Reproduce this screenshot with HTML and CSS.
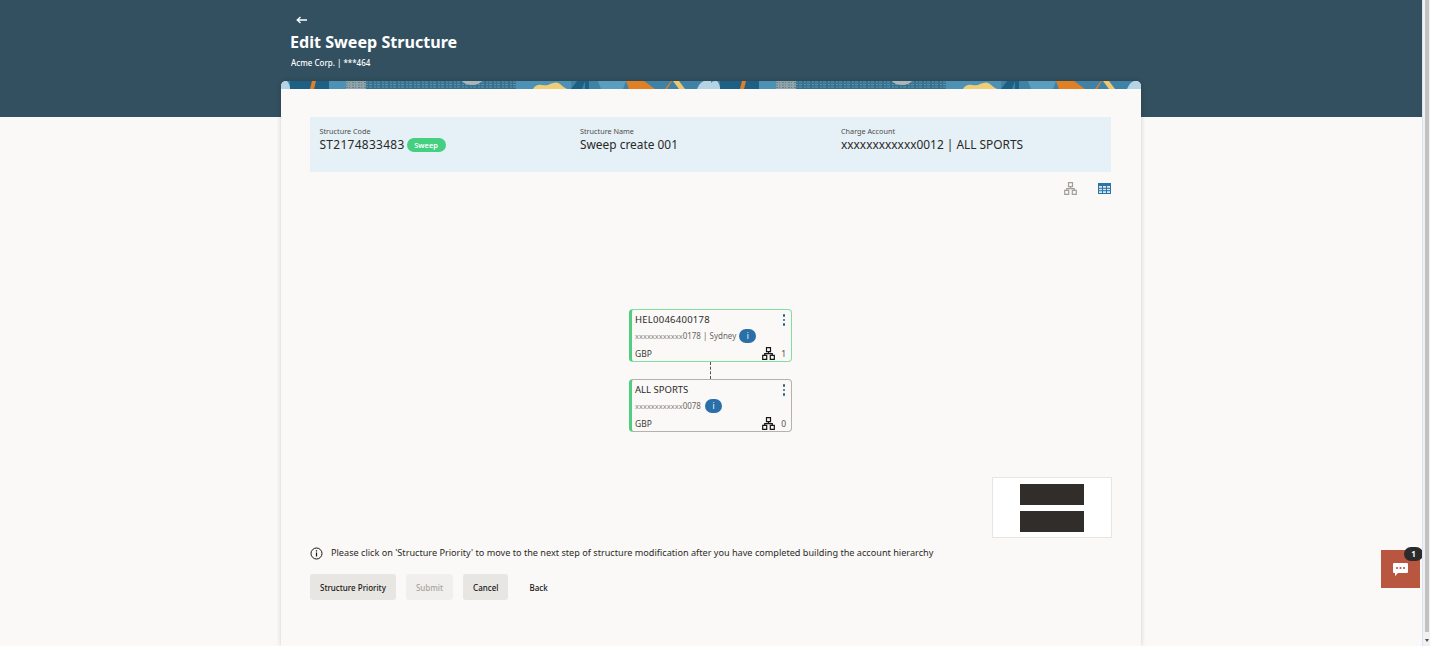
FILE: index.html
```html
<!DOCTYPE html>
<html lang="en">
<head>
<meta charset="utf-8">
<title>Edit Sweep Structure</title>
<link rel="stylesheet" href="styles.css">
</head>
<body>
<svg class="defs" width="0" height="0" aria-hidden="true">
  <defs>
    <symbol id="tree" viewBox="0 0 13 13">
      <path d="M4.500 .7h4v4h-4zM.7 8.300h4v4h-4zM8.300 8.300h4v4h-4zM6.500 4.700v2M2.700 8.300V6.700h7.600v1.600" fill="none" stroke="currentColor" stroke-width="1.200"/>
    </symbol>
    <pattern id="tile" width="430" height="8" patternUnits="userSpaceOnUse">
      <rect width="430" height="8" fill="#3f82a5"/>
      <rect x="9" width="40" height="8" fill="#1e5f84"/>
      <path d="M0 8V2Q1 0 4 0H6Q9 3 9 8Z" fill="#b4d3e4"/>
      <path d="M31 0h4l-2 8h-4Z" fill="#e08025"/>
      <rect x="48" width="17" height="8" fill="#4d92b5"/>
      <rect x="65" width="20" height="8" fill="#8ea4ad"/>
      <path d="M65 1.500h20M65 4h20M65 6.500h20" stroke="#6f7f86" stroke-width="1" stroke-dasharray="2 1 1 2"/>
      <rect x="85" width="150" height="8" fill="#35718f"/>
      <path d="M85 1h150M85 3.500h150M85 6h150" stroke="#5f94ad" stroke-width="1" stroke-dasharray="2 1 3 2"/>
      <path d="M181 0h20q-3 4-10 4t-10-4Z" fill="#a9b7bd"/>
      <rect x="235" width="55" height="8" fill="#4d92b5"/>
      <path d="M252 8q3-5 9-4t8-1q7-3 10 0t7 5Z" fill="#f0cd78"/>
      <path d="M290 8l6-8h8l-3 8Z" fill="#1e5f84"/>
      <rect x="304" width="4" height="8" fill="#1e5f84"/>
      <path d="M317 0h28l-3 8h-22Z" fill="#5b9dbe"/>
      <path d="M345 0h18l11 8h-26Z" fill="#e08025"/>
      <path d="M384 8l6-8h1l-5 8Z" fill="#e08025"/>
      <path d="M392 0h6l6 8h-6Z" fill="#efc76e"/>
      <path d="M416 8q3-7 7-8h7v8Z" fill="#b4d3e4"/>
    </pattern>
  </defs>
</svg>
<div class="app">
  <main class="page">
    <header class="hero">
      <button class="back-arrow" type="button" aria-label="Back">
        <svg width="12" height="8" viewBox="0 0 12 8"><path d="M11 4H1.500M4.500 1L1.200 4l3.300 3" fill="none" stroke="#fff" stroke-width="1.300"/></svg>
      </button>
      <h1 class="title">Edit Sweep Structure</h1>
      <p class="subtitle">Acme Corp. | ***464</p>
    </header>
    <section class="card">
      <svg class="banner" width="860" height="8" aria-hidden="true"><rect width="860" height="8" fill="url(#tile)"/></svg>
      <div class="card-body">
        <div class="summary">
          <div class="field">
            <span class="label">Structure Code</span>
            <span class="value"><span class="code">ST2174833483</span> <span class="tag">Sweep</span></span>
          </div>
          <div class="field">
            <span class="label">Structure Name</span>
            <span class="value">Sweep create 001</span>
          </div>
          <div class="field">
            <span class="label">Charge Account</span>
            <span class="value">xxxxxxxxxxxx0012 | ALL SPORTS</span>
          </div>
        </div>
        <div class="view-switch">
          <svg class="view-tree" width="13" height="13"><use href="#tree"/></svg>
          <svg class="view-table" width="13" height="11" viewBox="0 0 13 11">
            <rect width="13" height="11" fill="#2a74a8"/>
            <path d="M1 3h11v7H1z" fill="#d8e6ef"/>
            <path d="M1 5.300h11M1 7.700h11M4.500 3v7M8.500 3v7" stroke="#2a74a8" stroke-width="1"/>
          </svg>
        </div>
        <div class="canvas">
          <article class="node node-active">
            <div class="node-row">
              <span class="node-name node-code">HEL0046400178</span>
              <span class="kebab"><i></i><i></i><i></i></span>
            </div>
            <div class="node-acct"><span class="masked">xxxxxxxxxxxx</span>0178 | Sydney <span class="pill pill-far">i</span></div>
            <div class="node-row node-foot">
              <span>GBP</span>
              <span class="count"><svg width="13" height="13"><use href="#tree"/></svg><b>1</b></span>
            </div>
          </article>
          <div class="link"></div>
          <article class="node">
            <div class="node-row">
              <span class="node-name">ALL SPORTS</span>
              <span class="kebab"><i></i><i></i><i></i></span>
            </div>
            <div class="node-acct"><span class="masked">xxxxxxxxxxxx</span>0078 <span class="pill pill-near">i</span></div>
            <div class="node-row node-foot">
              <span>GBP</span>
              <span class="count"><svg width="13" height="13"><use href="#tree"/></svg><b>0</b></span>
            </div>
          </article>
          <div class="minimap"><span></span><span></span></div>
        </div>
        <p class="hint">
          <svg width="13" height="13" viewBox="0 0 13 13"><circle cx="6.500" cy="6.500" r="5.500" fill="none" stroke="#161513" stroke-width="1"/><path d="M6.500 5.500v4M6.500 3.300v1.200" stroke="#161513" stroke-width="1.200"/></svg>
          Please click on 'Structure Priority' to move to the next step of structure modification after you have completed building the account hierarchy
        </p>
        <div class="actions">
          <button class="btn" type="button">Structure Priority</button>
          <button class="btn btn-off" type="button">Submit</button>
          <button class="btn" type="button">Cancel</button>
          <button class="btn btn-plain" type="button">Back</button>
        </div>
      </div>
    </section>
    <div class="chat">
      <span class="chat-badge">1</span>
      <svg width="15" height="13" viewBox="0 0 15 13"><path d="M1 0h13a1 1 0 0 1 1 1v8a1 1 0 0 1-1 1H5l-3 3v-3H1a1 1 0 0 1-1-1V1a1 1 0 0 1 1-1Z" fill="#fff"/><circle cx="4" cy="5" r="1.100" fill="#b85640"/><circle cx="7.500" cy="5" r="1.100" fill="#b85640"/><circle cx="11" cy="5" r="1.100" fill="#b85640"/></svg>
    </div>
  </main>
  <div class="scrollbar">
    <div class="thumb"></div>
    <div class="arrow"></div>
  </div>
</div>
</body>
</html>
```
FILE: styles.css
```css
* { box-sizing: border-box; }
html, body { margin: 0; height: 100%; overflow: hidden; }
body { font-family: "Noto Sans", "Open Sans", sans-serif; color: #161513; background: #faf9f7; }
.defs { position: absolute; }
.app { display: flex; height: 646px; }
.page {
  flex: 1;
  position: relative;
  overflow: hidden;
  background: linear-gradient(#32505f 117px, #faf9f7 117px);
}
.hero { width: 860px; height: 81px; margin: 0 auto; padding: 14px 9px 0; color: #fff; }
.back-arrow { display: block; width: 20px; height: 12px; margin: 0; padding: 0 0 0 3px; border: 0; background: none; line-height: 0; }
.title { margin: 4px 0 0; font-size: 16.100px; line-height: 24px; font-weight: 700; }
.subtitle { margin: 3px 0 0 1px; font-size: 8px; line-height: 12px; font-weight: 500; }
.card {
  width: 860px;
  height: 565px;
  margin: 0 auto;
  border-radius: 5px 5px 0 0;
  background: #faf9f7;
  box-shadow: 0 0 5px rgba(0, 0, 0, .18);
  overflow: hidden;
}
.banner { display: block; }
.card-body { padding: 28px 30px 0 29px; }
.summary {
  display: grid;
  grid-template-columns: 260.500px 261px 1fr;
  height: 55px;
  padding: 9px 0 0 9.500px;
  background: #e5f0f7;
}
.field { display: flex; flex-direction: column; }
.label { font-size: 7.250px; line-height: 10px; color: #4f4c48; }
.value { font-size: 11.900px; line-height: 17px; color: #2b2926; white-space: nowrap; }
.code { letter-spacing: .33px; }
.tag {
  display: inline-block;
  height: 14px;
  padding: 0 7.500px;
  margin-left: -1px;
  border-radius: 7px;
  background: #45cf80;
  color: #fff;
  font-size: 7.500px;
  line-height: 14px;
  font-weight: 600;
  vertical-align: 1px;
}
.view-switch { display: flex; justify-content: flex-end; align-items: center; gap: 21px; height: 16px; margin-top: 8px; }
.view-tree { color: #a39e97; }
.canvas { position: relative; display: flex; flex-direction: column; align-items: center; height: 350px; padding-top: 113px; }
.node {
  flex: none;
  width: 163px;
  height: 53px;
  padding: 3px 5px 0 3px;
  border: 1px solid #b5b1ab;
  border-left: 3px solid #4fce7f;
  border-radius: 4px;
  background: #faf9f7;
  font-size: 8.500px;
}
.node-active { border-color: #7fe0a2; border-left-color: #4fce7f; }
.node-row { display: flex; justify-content: space-between; align-items: flex-start; }
.node-name { font-size: 9.500px; line-height: 13px; color: #2b2926; }
.node-code { letter-spacing: .25px; }
.kebab { display: flex; flex-direction: column; gap: 2px; padding: 1px 1px 0 0; }
.kebab i { width: 2.500px; height: 2.500px; border-radius: 50%; background: #2a5f80; }
.node-acct { margin-top: 2px; display: flex; align-items: center; gap: 2px; height: 15px; font-size: 8px; color: #6b6760; white-space: nowrap; }
.masked { margin-right: -2px; color: #8a867f; font-size: 7.500px; }
.pill { width: 17px; height: 14px; border-radius: 7px; background: #2a6fa8; color: #fff; font-size: 8px; line-height: 14px; text-align: center; }
.pill-far { margin-left: 1px; }
.pill-near { margin-left: 2px; }
.node-foot { margin-top: 4px; align-items: center; height: 14px; line-height: 14px; color: #3b3936; }
.count { display: flex; align-items: center; gap: 6px; margin-top: -1px; color: #161513; }
.count b { font-weight: 400; color: #55524d; }
.link { flex: none; width: 1px; height: 17px; border-left: 1px dashed #55524d; }
.minimap {
  position: absolute;
  top: 281px;
  right: -1px;
  display: flex;
  flex-direction: column;
  align-items: center;
  gap: 6px;
  width: 120px;
  height: 61px;
  padding-top: 6px;
  background: #fff;
  border: 1px solid #e8e6e2;
}
.minimap span { width: 64px; height: 21px; background: #312d2a; }
.hint { display: flex; align-items: center; gap: 8px; height: 14px; margin: 0; font-size: 9.150px; line-height: 14px; color: #2b2926; white-space: nowrap; }
.actions { display: flex; gap: 10px; margin-top: 14px; }
.btn {
  height: 26px;
  padding: 0 10px;
  border: 0;
  border-radius: 3px;
  background: #e8e6e3;
  color: #161513;
  font-family: inherit;
  font-size: 8px;
  font-weight: 500;
}
.btn-off { background: #f0efed; color: #a8a5a0; }
.btn-plain { padding: 0 11px; background: none; }
.chat {
  position: absolute;
  left: 1381px;
  top: 550px;
  display: flex;
  align-items: center;
  justify-content: center;
  width: 39px;
  height: 38px;
  background: #b85640;
}
.chat-badge {
  position: absolute;
  top: -3px;
  right: -3px;
  width: 19px;
  height: 14px;
  border-radius: 7px;
  background: #2b2b2b;
  color: #fff;
  font-size: 8px;
  font-weight: 700;
  line-height: 14px;
  text-align: center;
}
.scrollbar { flex: none; display: flex; flex-direction: column; width: 8px; padding: 0 1px 0 2px; background: #f1f1f1; border-left: 1px solid #d5e6f2; }
.thumb { flex: 1; margin-bottom: 7px; background: #c1c1c1; }
.arrow { width: 0; height: 0; margin: 0 auto 4px; border: 2.500px solid transparent; border-top: 3px solid #505050; border-bottom: 0; }
```
